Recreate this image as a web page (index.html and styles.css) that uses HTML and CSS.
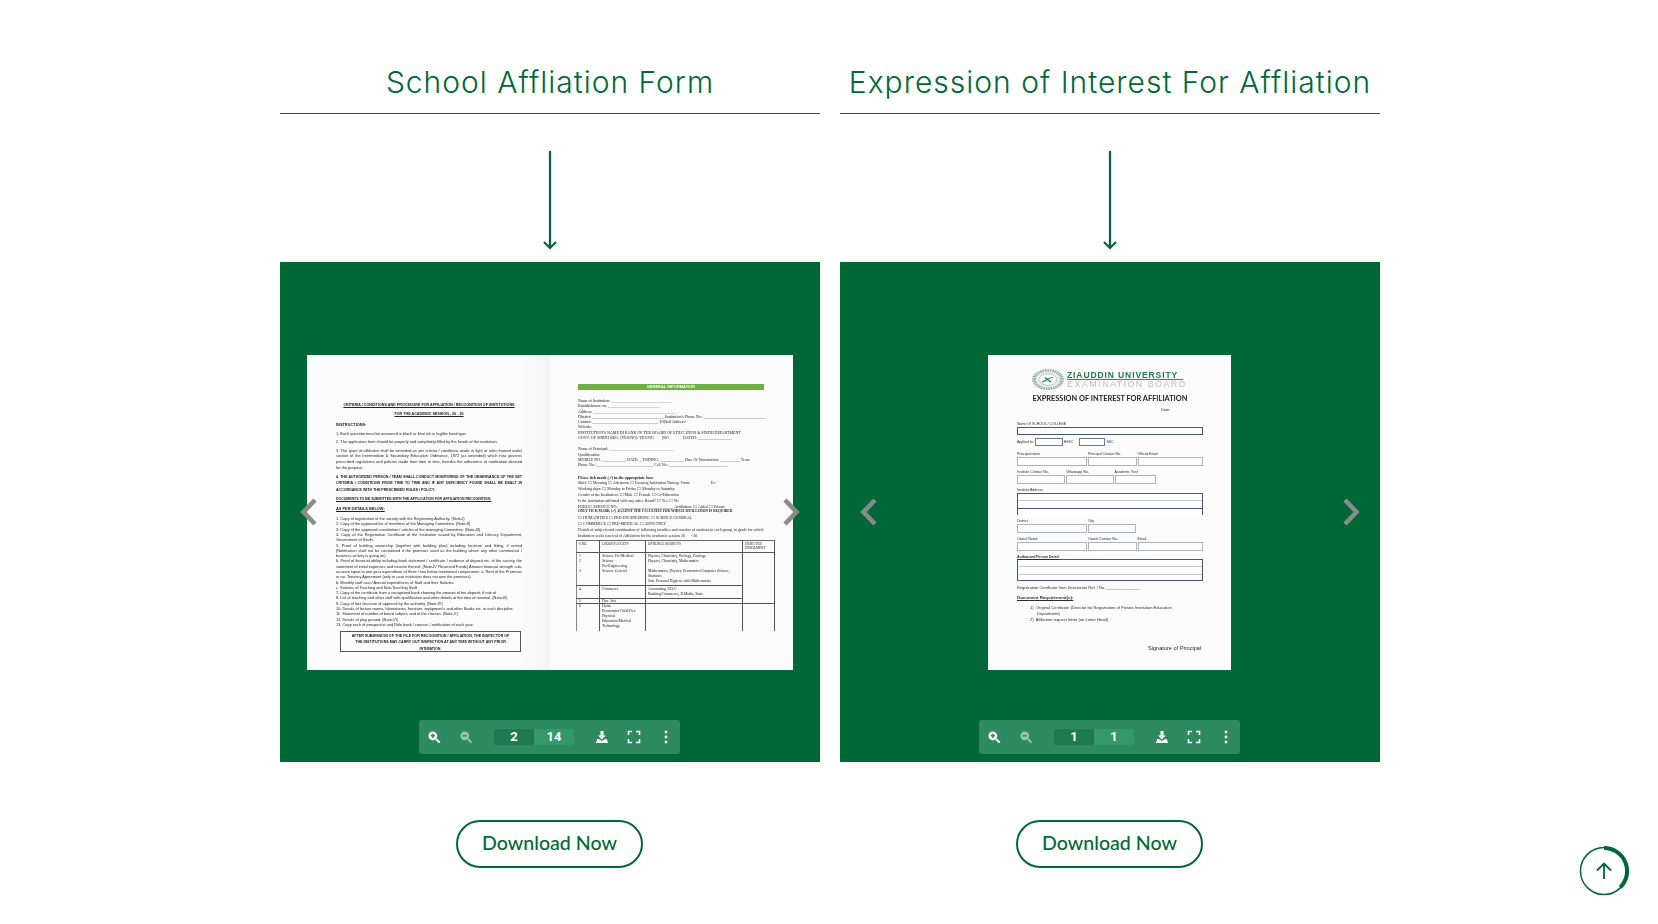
FILE: index.html
```html
<!DOCTYPE html>
<html lang="en">
<head>
<meta charset="utf-8">
<title>Affiliation Forms</title>
<link rel="stylesheet" href="styles.css">
</head>
<body>
<svg class="defs">
  <symbol id="i-zoom-in" viewBox="0 0 14 14"><circle cx="5.8" cy="5.8" r="4.4" fill="currentColor"/><path d="M9 9l3.6 3.6" stroke="currentColor" stroke-width="2" fill="none"/><path d="M3.6 5.8h4.4M5.8 3.6v4.4" stroke="#2e8b60" stroke-width="1.4" fill="none"/></symbol>
  <symbol id="i-zoom-out" viewBox="0 0 14 14"><circle cx="5.8" cy="5.8" r="4.4" fill="currentColor"/><path d="M9 9l3.6 3.6" stroke="currentColor" stroke-width="2" fill="none"/><path d="M3.6 5.8h4.4" stroke="#2e8b60" stroke-width="1.4" fill="none"/></symbol>
  <symbol id="i-down" viewBox="0 0 14 14"><path d="M5.5 1h3v4.4h2.4L7 9.4 3.1 5.4h2.4z" fill="currentColor"/><path d="M1 13l1.2-4h1.6L7 11l3.2-2h1.6L13 13z" fill="currentColor"/></symbol>
  <symbol id="i-full" viewBox="0 0 14 14"><path d="M1.5 5V1.5H5M9 1.5h3.5V5M12.5 9v3.5H9M5 12.5H1.5V9" stroke="currentColor" stroke-width="1.6" fill="none"/></symbol>
  <symbol id="i-more" viewBox="0 0 14 14"><circle cx="7" cy="2" r="1.4" fill="currentColor"/><circle cx="7" cy="7" r="1.4" fill="currentColor"/><circle cx="7" cy="12" r="1.4" fill="currentColor"/></symbol>
  <symbol id="i-prev" viewBox="0 0 18 30"><path d="M15 3L3.5 15 15 27" stroke="currentColor" stroke-width="4.6" fill="none"/></symbol>
  <symbol id="i-next" viewBox="0 0 18 30"><path d="M3 3l11.500 12L3 27" stroke="currentColor" stroke-width="4.6" fill="none"/></symbol>
  <symbol id="i-arrow" viewBox="0 0 14 100"><path d="M7 0v97M1 91l6 6 6-6" stroke="currentColor" stroke-width="2.200" fill="none"/></symbol>
</svg>

<main class="forms">

  <section class="form-col">
    <h2 class="form-title">School Affliation Form</h2>
    <svg class="down-arrow"><use href="#i-arrow"/></svg>
    <div class="viewer">
      <svg class="nav nav-prev"><use href="#i-prev"/></svg>
      <svg class="nav nav-next"><use href="#i-next"/></svg>
      <div class="spread">
        <div class="paper page-a">
          <p class="h1 center u">CRITERIA / CONDITIONS AND PROCEDURE FOR AFFILIATION / RECOGNITION OF INSTITUTIONS</p>
          <p class="h2 center u">FOR THE ACADEMIC SESSION - 20 - 20</p>
          <p class="ins b">INSTRUCTIONS:</p>
          <p class="one">1. Each question must be answered in black or blue ink in legible hand type.</p>
          <p class="one">2. The application form should be properly and completely filled by the heads of the institution.</p>
          <p class="para">3. The grant of affiliation shall be extended as per criteria / conditions made in light of rules framed under section of the Intermediate &amp; Secondary Education Ordinance, 1972 (as amended) which now governs prescribed regulations and policies made from time to time, besides the adherence of notification devised for the purpose.</p>
          <p class="para caps b">4. THE AUTHORIZED PERSON / TEAM SHALL CONDUCT MONITORING OF THE OBSERVANCE OF THE SET CRITERIA / CONDITIONS FROM TIME TO TIME AND IF ANY DEFICIENCY FOUND SHALL BE DEALT IN ACCORDANCE WITH THE PRESCRIBED RULES / POLICY.</p>
          <p class="one caps-b b u">DOCUMENTS TO BE SUBMITTED WITH THE APPLICATION FOR AFFILIATION RECOGNITION:</p>
          <p class="one gap b u">AS PER DETAILS BELOW:</p>
          <div class="docs">
            <p>1. Copy of registration of the society with the Registering Authority. (Note-I)</p>
            <p>2. Copy of the approved list of members of the Managing Committee. (Note-II)</p>
            <p>3. Copy of the approved constitution / articles of the managing Committee. (Note-III)</p>
            <p>4. Copy of the Registration Certificate of the Institution issued by Education and Literacy Department, Government of Sindh.</p>
            <p>5. Proof of building ownership (together with building plan) including furniture and fitting, if rented (Notification shall not be considered if the premises used as the building where any other commercial / business activity is going on).</p>
            <p>6. Proof of financial ability including bank statement / certificate / evidence of deposit etc. of the society, the statement of initial expenses and income thereof. (Note-IV Reserved Funds) Amount financial strength sub-account equal to one year expenditure of three / two below mentioned components: a. Rent of the Premises or no. Tenancy Agreement (only in case institution does not own the premises)</p>
            <p>b. Monthly staff cost / Annual expenditures of Staff and their Salaries</p>
            <p>c. Salaries of Teaching and Non-Teaching Staff</p>
            <p>7. Copy of the certificate from a recognized bank showing the amount of fee deposit, if rate of</p>
            <p>8. List of teaching and other staff with qualification and other details at the time of renewal. (Note-III)</p>
            <p>9. Copy of last structure of approval by the authority. (Note-IV)</p>
            <p>10. Details of lecture rooms, laboratories, furniture, equipment's and other Books etc. in each discipline</p>
            <p>11. Statement of number of board subject, and of the classes. (Note-V)</p>
            <p>12. Details of play ground. (Note-VI)</p>
            <p>13. Copy each of prospectus and Rule book / courses / notification of each year.</p>
          </div>
          <div class="notice"><p>AFTER SUBMISSION OF THE FILE FOR RECOGNITION / AFFILIATION, THE INSPECTOR OF<br>THE INSTITUTIONS MAY CARRY OUT INSPECTION AT ANY TIME WITHOUT ANY PRIOR<br>INTIMATION.</p></div>
        </div>

        <div class="paper page-b">
          <div class="green-bar">GENERAL INFORMATION</div>
          <div class="block">
            <p>Name of Institution: <i class="dash">______________________________</i></p>
            <p>Establishment on: <i class="dash">__________________________</i></p>
            <p>Address: <i class="dash">_________________________________________</i></p>
            <p>District: ____________________________________ Institution's Phone No.: _______________________________</p>
            <p>Contact: _________________________________ E-Mail Address:</p>
            <p>Website:</p>
            <p>INSTITUTION'S NAME IN RANK OF THE BOARD OF EDUCATION &amp; SINDH DEPARTMENT</p>
            <p>GOVT. OF SINDH REG. (YES/NO): YES/NO &nbsp; &nbsp; &nbsp; &nbsp;(NO &nbsp; &nbsp; &nbsp; &nbsp; &nbsp; &nbsp; &nbsp;DATED: _________________</p>
          </div>
          <div class="block">
            <p>Name of Principal: <i class="dash">________________________________</i></p>
            <p>Qualification:</p>
            <p>MOBILE NO. ____________ DATE: _ ENDING: ____________ Date Of Nomination: __________ Years</p>
            <p>Phone No.: ____________________________ Cell No.: _____________________________</p>
          </div>
          <div class="block wide">
            <p class="b">Please tick mark (✓) in the appropriate box:</p>
            <p>Shift: ☐ Morning ☐ Afternoon ☐ Evening Institution Timing: From: &nbsp; &nbsp; &nbsp; &nbsp; &nbsp; &nbsp; &nbsp; &nbsp; &nbsp; &nbsp;To:</p>
            <p>Working days: ☐ Monday to Friday ☐ Monday to Saturday</p>
            <p>Gender of the Institution: ☐ Male ☐ Female ☐ Co-Education</p>
            <p>Is the institution affiliated with any other Board? ☐ Yes ☐ No</p>
            <p>PUBLIC SERVICE NO.: ___________________________ Affiliation: ☐ Aided ☐ Private</p>
            <p class="b tick">ONLY TICK MARK (✓) AGAINST THE FACULTIES FOR WHICH AFFILIATION IS REQUIRED</p>
            <p>☐ HUMANITIES ☐ PRE-ENGINEERING ☐ SCIENCE GENERAL</p>
            <p>☐ COMMERCE ☐ PRE-MEDICAL ☐ ARTS ONLY</p>
            <p>Details of subjects and combination of following faculties and number of students in each group, in grade for which</p>
            <p>Institution seeks renewal of Affiliation for the academic session 20 &nbsp; &nbsp; &nbsp;- 20</p>
          </div>
          <table class="subjects">
            <tr class="head"><td>S.NO.</td><td>GROUP/FACULTY</td><td>OPTIONAL SUBJECTS</td><td>EXPECTED ENROLMENT</td></tr>
            <tr class="r1"><td>1<br>2<br><br>3</td><td>Science Pre-Medical<br>Science<br>Pre-Engineering<br>Science General</td><td>Physics, Chemistry, Biology, Zoology<br>Physics, Chemistry, Mathematics<br><br>Mathematics, Physics, Economics/Computer Science,<br>Statistics<br>Safe Personal Hygiene with Mathematics</td><td rowspan="3"></td></tr>
            <tr class="r2"><td>4</td><td>Commerce</td><td>Accounting, P.O.C<br>Banking/Commerce, B.Maths, Stats</td></tr>
            <tr class="r3"><td>5</td><td>Fine Arts</td><td></td></tr>
            <tr class="r4"><td>6</td><td>Home<br>Economics/Child Dev<br>Physical<br>Education/Medical<br>Technology</td><td></td><td></td></tr>
          </table>
        </div>
      </div>
      <div class="toolbar">
        <svg class="tool t-in"><use href="#i-zoom-in"/></svg>
        <svg class="tool t-out"><use href="#i-zoom-out"/></svg>
        <div class="pager"><span class="cur">2</span><span class="tot">14</span></div>
        <svg class="tool t-dl"><use href="#i-down"/></svg>
        <svg class="tool t-fs"><use href="#i-full"/></svg>
        <svg class="tool t-more"><use href="#i-more"/></svg>
      </div>
    </div>
    <a class="dl-btn" href="#">Download Now</a>
  </section>

  <section class="form-col">
    <h2 class="form-title">Expression of Interest For Affliation</h2>
    <svg class="down-arrow"><use href="#i-arrow"/></svg>
    <div class="viewer">
      <svg class="nav nav-prev"><use href="#i-prev"/></svg>
      <svg class="nav nav-next"><use href="#i-next"/></svg>
      <div class="spread">
        <div class="paper page-c">
          <div class="brand">
            <svg class="seal" viewBox="0 0 32 32" preserveAspectRatio="none"><circle cx="16" cy="16" r="14" fill="#eef2ee" stroke="#8fa396" stroke-width="4" stroke-dasharray="1.500 1"/><circle cx="16" cy="16" r="9" fill="#fff" stroke="#a5b7aa"/><path d="M10 20c4-1 5-7 11-7M13 13l6 7" stroke="#2f8a55" stroke-width="1.800" fill="none"/></svg>
            <div class="brand-text"><p class="zu">ZIAUDDIN UNIVERSITY</p><p class="eb">EXAMINATION BOARD</p></div>
          </div>
          <p class="eoi">EXPRESSION OF INTEREST FOR AFFILIATION</p>
          <p class="date">Date:</p>
          <p class="lbl first">Name Of SCHOOL / COLLEGE</p>
          <div class="box full name-box"></div>
          <div class="applied"><span>Applied for</span><div class="box w27"></div><span>HSSC</span><div class="box w26 m5"></div><span>SSC</span></div>
          <div class="lbls l-first"><span class="w71">Principal name</span><span class="w49">Principal Contact No.</span><span>Official Email</span></div>
          <div class="boxes"><div class="box w70"></div><div class="box w49"></div><div class="box w65"></div></div>
          <div class="lbls"><span class="w49b">Institute Contact No.</span><span class="w48">Whatsapp No.</span><span>Academic Year</span></div>
          <div class="boxes"><div class="box w48"></div><div class="box w48"></div><div class="box w41"></div></div>
          <p class="lbl addr">Institute Address</p>
          <div class="box full multi"><i></i><i></i></div>
          <div class="lbls"><span class="w71">District</span><span>City</span></div>
          <div class="boxes"><div class="box w70"></div><div class="box w48"></div></div>
          <div class="lbls"><span class="w71">Owner Name</span><span class="w49">Owner Contact No.</span><span>Email</span></div>
          <div class="boxes"><div class="box w70"></div><div class="box w49"></div><div class="box w65"></div></div>
          <p class="lbl addr b u">Authorized Person Detail</p>
          <div class="box full multi closed"><i></i><i></i></div>
          <p class="lbl reg">Registration Certificate from Directorate Ref. / No. _______________</p>
          <p class="lbl req b u">Document Requirement(s):</p>
          <ol class="reqs">
            <li>Original Certificate (Director for Registration of Private Institution Education Department)</li>
            <li>Affiliation request letter (on Letter Head)</li>
          </ol>
          <p class="sign">Signature of Principal</p>
        </div>
      </div>
      <div class="toolbar">
        <svg class="tool t-in"><use href="#i-zoom-in"/></svg>
        <svg class="tool t-out"><use href="#i-zoom-out"/></svg>
        <div class="pager"><span class="cur">1</span><span class="tot">1</span></div>
        <svg class="tool t-dl"><use href="#i-down"/></svg>
        <svg class="tool t-fs"><use href="#i-full"/></svg>
        <svg class="tool t-more"><use href="#i-more"/></svg>
      </div>
    </div>
    <a class="dl-btn" href="#">Download Now</a>
  </section>

</main>

<a class="to-top" href="#">
  <svg viewBox="0 0 50 50" width="50" height="50">
    <circle cx="25" cy="25" r="23.500" fill="none" stroke="#006837" stroke-width="1.500"/>
    <path d="M25 2A23 23 0 0 1 41.300 41.300" fill="none" stroke="#006837" stroke-width="4"/>
    <path d="M25 33V17.500M18 24.500l7-7 7 7" fill="none" stroke="#006837" stroke-width="1.800"/>
  </svg>
</a>
</body>
</html>
```

FILE: styles.css
```css
* { padding:0; margin:0; box-sizing:border-box; }
body { background:#fff; color:#006837; font-family:"Lato","Liberation Sans",sans-serif; }
.defs { display:none; }

.forms { display:flex; justify-content:center; gap:20px; padding:63px 0 0 2px; }
.form-col { width:540px; display:flex; flex-direction:column; align-items:center; }
.form-title { width:100%; height:51px; border-bottom:1px solid #1b5e3e; text-align:center;
  font-family:"Inter",sans-serif; font-weight:300; font-size:30px; line-height:38px; letter-spacing:1px; }
.down-arrow { width:14px; height:100px; margin-top:37px; color:#006837; }

/* viewer */
.viewer { position:relative; width:100%; height:500px; margin-top:11px; background:#006837;
  display:flex; flex-direction:column; align-items:center; }
.spread { display:flex; justify-content:center; margin-top:92.500px; height:315px; width:100%; }
.nav { position:absolute; z-index:2; top:235px; width:18px; height:30px; color:#8a8a8a; }
.nav-prev { left:20px; }
.nav-next { right:20px; }

.toolbar { display:flex; align-items:center; width:261px; height:34px; margin:50.500px 1px 0 0; padding-left:8px;
  background:#2e8b60; border-radius:3px; color:#fff; }
.tool { width:14px; height:14px; flex:none; }
.t-out { margin-left:18px; opacity:.5; }
.t-dl { margin-left:21px; }
.t-fs { margin-left:18px; }
.t-more { margin-left:18px; }
.pager { display:flex; margin-left:21px; width:80px; height:16px; border-radius:3px; overflow:hidden;
  font:700 13px/16px "Roboto","Liberation Sans",sans-serif; text-align:center; }
.pager span { width:40px; }
.cur { background:#1f7a50; }
.tot { background:#339966; }

.dl-btn { display:block; width:187px; height:48px; margin:58px 1px 0 0; border:2px solid #006837; border-radius:24px;
  color:#006837; text-align:center; text-decoration:none; font-weight:500; font-size:19.600px; line-height:42px; }

.to-top { position:fixed; right:29px; bottom:28px; width:50px; height:50px; }

/* scanned paper */
.paper { background:#fbfbfb; color:#222; font-family:"Liberation Sans",sans-serif; font-size:3.900px;
  height:315px; overflow:hidden; filter:blur(.25px); }
.b { font-weight:700; }
.u { text-decoration:underline; }
.center { text-align:center; }

.page-a { width:243px; padding:48px 28px 0 29px; line-height:5.900px; background:linear-gradient(to right,#fcfcfc 88%,#f3f3f3); }
.h1 { font-weight:700; font-size:3.700px; height:9px; white-space:nowrap; }
.h2 { font-weight:700; font-size:3.700px; height:10px; }
.ins { height:9px; }
.one { height:8.500px; white-space:nowrap; overflow:hidden; }
.para { text-align:justify; margin-bottom:3px; }
.caps { line-height:6.300px; font-size:3.600px; margin-bottom:3.500px; }
.caps-b { font-size:3.500px; height:9.500px; }
.gap { height:10px; }
.docs { line-height:5.300px; text-align:justify; }
.notice { margin:3.500px 0 0 4px; padding-top:1px; border:1px solid #555; height:21px; width:181px; line-height:6.400px;
  text-align:center; font-weight:700; font-size:3.650px; white-space:nowrap; }

.page-b { width:243px; padding:29px 11px 0 28px; line-height:5.300px; font-family:"Liberation Serif",serif; font-size:4px; }
.green-bar { width:186px; height:6.500px; background:#70ad47; color:#fff; text-align:center; font:700 4px/6.500px "Liberation Sans",sans-serif; }
.block { margin-top:8px; white-space:nowrap; }
.block + .block { margin-top:6px; }
.block.wide { line-height:5.800px; margin-top:7px; }
.tick { font-size:3.550px; }
.dash { font-style:normal; color:#555; }
.subjects { width:199px; margin:1.500px 0 0 -2px; border-collapse:collapse; table-layout:fixed; line-height:5px; }
.subjects td { border:1px solid #555; border-top-color:#666; vertical-align:top; padding:1px 2px; font-size:3.800px; overflow:hidden; white-space:nowrap; }
.subjects td:nth-child(1) { width:23px; border-left-color:#888; }
.subjects td:nth-child(2) { width:46px; }
.subjects td:nth-child(3) { width:97px; }
.subjects .head td { height:11px; white-space:normal; font-size:3.300px; line-height:4.500px; }
.r1 td { height:32px; }
.r2 td { height:13px; }
.r3 td { height:5px; padding:0 2px; line-height:4px; }
.r4 td { height:28px; border-bottom:0; line-height:5px; padding-top:0; }

/* single page form */
.page-c { width:243px; margin-right:1px; padding:14px 28px 0 29px; color:#2b2b2b; background:#fcfcfc; }
.brand { display:flex; align-items:center; margin-left:15px; height:21px; }
.seal { width:32px; height:21px; flex:none; }
.brand-text { margin-left:3px; }
.zu { font:700 8.500px/8px "Liberation Sans",sans-serif; letter-spacing:.9px; color:#1e7a45; border-bottom:.6px solid #4b7a5e; width:116px; white-space:nowrap; }
.eb { font:400 9px/8px "Liberation Sans",sans-serif; letter-spacing:1.400px; color:#bdbdbd; white-space:nowrap; }
.eoi { margin-top:4px; text-align:center; font:700 7.400px/9px "Lato","Liberation Sans",sans-serif; color:#222; white-space:nowrap; }
.date { margin:4px 0 0 144px; line-height:6px; }
.lbl { line-height:4px; font-size:3.500px; white-space:nowrap; }
.first { margin-top:9.700px; }
.box { border:.6px solid #aab3c4; background:#fff; flex:none; }
.full { width:186px; border-color:#45557a; }
.name-box { height:8.300px; margin-top:1px; }
.applied { display:flex; align-items:center; height:9.300px; margin-top:1.700px; font-size:3.500px; gap:1px; }
.applied .box { height:8.600px; border-color:#6b7a9a; }
.w27 { width:28px; }
.w26 { width:26px; }
.m5 { margin-left:5px; }
.lbls { display:flex; line-height:4px; font-size:3.500px; margin-top:4.300px; white-space:nowrap; }
.l-first { margin-top:5.700px; }
.w71 { width:71px; }
.w49 { width:49px; }
.lbls .w49 { width:49.500px; }
.w49b { width:49.500px; }
.w48 { width:48px; }
.w41 { width:41px; }
.w70 { width:70px; }
.w65 { width:65px; }
.boxes { display:flex; gap:1px; height:9px; margin-top:.8px; }
.lbl.addr { margin-top:4.300px; }
.multi { display:flex; flex-direction:column; height:21.500px; border-width:.6px .6px 0; margin-top:.7px; }
.multi i { display:block; height:7px; border-bottom:.6px solid #c4cad6; }
.multi i:last-child { border-bottom-color:#45557a; height:7.500px; }
.closed { height:22.300px; margin-top:0; border-bottom-width:.8px; }
.multi.closed i:last-child { border-bottom-color:#c4cad6; }
.lbl.reg { margin-top:5px; font-size:4px; }
.lbl.req { margin-top:5.700px; font-size:4.400px; }
.reqs { margin:5px 0 0 13px; list-style:none; counter-reset:req; font-size:4.100px; line-height:6px; width:165px; }
.reqs li { counter-increment:req; padding-left:7px; text-indent:-7px; }
.reqs li::before { content:counter(req) ")  "; white-space:pre; }
.sign { margin:22.300px 0 0 131px; white-space:nowrap; font-size:5.600px; line-height:6px; }
```
